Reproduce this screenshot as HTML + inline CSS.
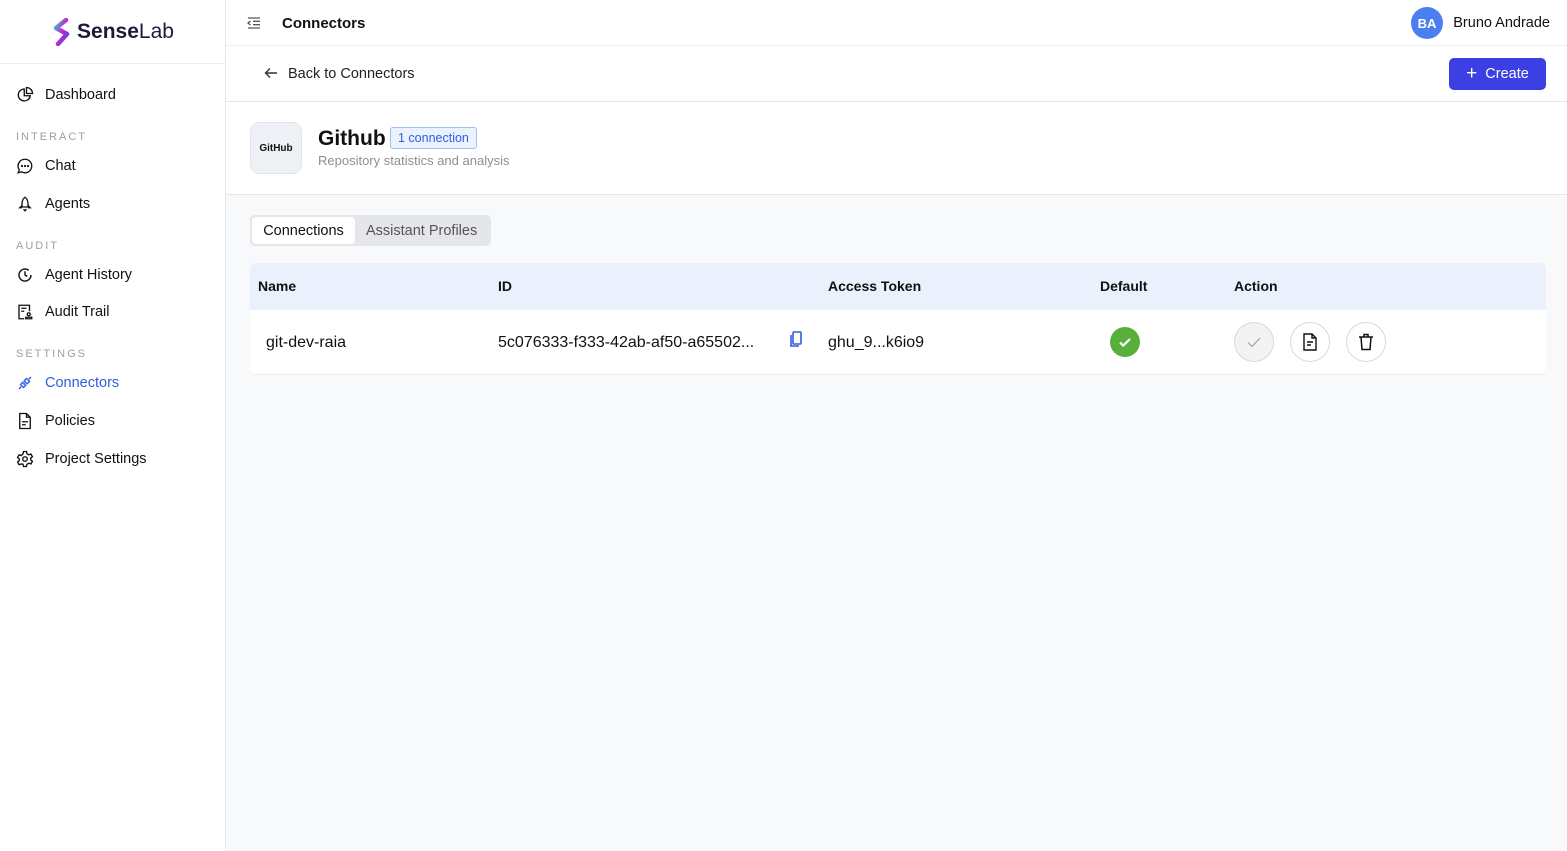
<!DOCTYPE html>
<html><head><meta charset="utf-8"><style>
*{box-sizing:border-box;margin:0;padding:0}
body{width:1567px;height:851px;font-family:"Liberation Sans",sans-serif;color:#111;background:#f8f9fb;position:relative;overflow:hidden;font-size:14px}
.side{position:absolute;left:0;top:0;width:226px;height:851px;background:#fff;border-right:1px solid #e5e7eb}
.logo{height:64px;border-bottom:1px solid #eceef1;display:flex;align-items:center;justify-content:center;font-size:21px;font-weight:bold;color:#1e1b3a}
.logo svg{margin-right:4px}
.logo span{font-weight:normal}
.item{position:absolute;left:16px;display:flex;align-items:center;gap:11px;font-size:14.5px}
.item svg{width:18px;height:18px;flex:none}
.sec{position:absolute;left:16px;font-size:11px;letter-spacing:2px;color:#9aa0aa}
.top{position:absolute;left:226px;top:0;right:0;height:46px;background:#fff;border-bottom:1px solid #eceef1}
.bar2{position:absolute;left:226px;top:46px;right:0;height:56px;background:#fff;border-bottom:1px solid #e5e7eb}
.head{position:absolute;left:226px;top:102px;right:0;height:93px;background:#fff;border-bottom:1px solid #e5e7eb}
.tbl{position:absolute;left:250px;top:263px;width:1296px;height:112px;background:#fff;border-radius:6px;overflow:hidden;border-bottom:1px solid #eceef1}
.th{height:47px;background:#eaf1fd;position:relative;font-weight:bold;font-size:14px}
.th div,.tr div{position:absolute}
.th div{top:15px}
.circ{width:40px;height:40px;border-radius:50%;border:1px solid #d7d9dd;display:flex;align-items:center;justify-content:center;background:#fff}
</style></head><body>
<div class="side">
<div class="logo"><svg width="22" height="28" viewBox="0 0 22 28"><defs><linearGradient id="g" x1="0" y1="0" x2="1" y2="1"><stop offset="0" stop-color="#2dd4bf"/><stop offset=".5" stop-color="#c026d3"/><stop offset="1" stop-color="#4f46e5"/></linearGradient></defs><path d="M15 2 L5 10 L16 16 L7 26" stroke="url(#g)" stroke-width="4.5" fill="none" stroke-linecap="round" stroke-linejoin="round"/></svg>Sense<span>Lab</span></div>
<div class="item" style="top:86px"><svg viewBox="0 0 24 24" fill="none" stroke="#111" stroke-width="1.8"><path d="M11 4a8 8 0 1 0 8 9h-8z"/><path d="M14 2v8h8a8 8 0 0 0-8-8z"/></svg>Dashboard</div>
<div class="sec" style="top:131px">INTERACT</div>
<div class="item" style="top:157px"><svg viewBox="0 0 24 24" fill="none" stroke="#111" stroke-width="1.8"><path d="M12 3a9 9 0 1 1-4.5 16.8L3 21l1.3-4A9 9 0 0 1 12 3z"/><circle cx="8" cy="12" r=".6"/><circle cx="12" cy="12" r=".6"/><circle cx="16" cy="12" r=".6"/></svg>Chat</div>
<div class="item" style="top:195px"><svg viewBox="0 0 24 24" fill="none" stroke="#111" stroke-width="1.8"><path d="M12 3c3 2 4 5 4 9v4H8v-4c0-4 1-7 4-9zM8 14l-3 3h3M16 14l3 3h-3M10 19l2 2 2-2"/></svg>Agents</div>
<div class="sec" style="top:240px">AUDIT</div>
<div class="item" style="top:266px"><svg viewBox="0 0 24 24" fill="none" stroke="#111" stroke-width="1.9"><path d="M20 12a8 8 0 1 1-3-6.2"/><path d="M12 7v5l3 2"/></svg>Agent History</div>
<div class="item" style="top:303px"><svg viewBox="0 0 24 24" fill="none" stroke="#111" stroke-width="1.8"><path d="M11 21H4V3h14v8"/><path d="M7 7h7M7 11h4"/><circle cx="17" cy="15" r="2"/><path d="M13 21h8v-2h-8z"/></svg>Audit Trail</div>
<div class="sec" style="top:348px">SETTINGS</div>
<div class="item" style="top:374px;color:#2f5ee0"><svg viewBox="0 0 24 24" fill="none" stroke="#2f5ee0" stroke-width="1.8"><path d="M4 20l3-3M20 4l-3 3M9 11l-3 3 4 4 3-3zM15 13l3-3-4-4-3 3zM10 14l2-2"/></svg>Connectors</div>
<div class="item" style="top:412px"><svg viewBox="0 0 24 24" fill="none" stroke="#111" stroke-width="1.8"><path d="M5 2h9l5 5v15H5zM14 2v5h5M8 13h8M8 17h5"/></svg>Policies</div>
<div class="item" style="top:450px"><svg viewBox="0 0 24 24" fill="none" stroke="#111" stroke-width="1.8"><circle cx="12" cy="12" r="3"/><path d="M10 2h4l.6 3 2.4 1.4 2.9-1 2 3.5-2.3 2v2.2l2.3 2-2 3.5-2.9-1-2.4 1.4-.6 3h-4l-.6-3L7 18.6l-2.9 1-2-3.5 2.3-2v-2.2l-2.3-2 2-3.5 2.9 1L9.4 5z"/></svg>Project Settings</div>
</div>
<div class="top">
<svg style="position:absolute;left:20px;top:15px" width="16" height="16" viewBox="0 0 16 16" fill="none" stroke="#555" stroke-width="1.3"><path d="M2 3h12M7 6.3h7M7 9.7h7M2 13h12M4.5 6l-2.5 2 2.5 2"/></svg>
<div style="position:absolute;left:56px;top:15px;font-size:15px;font-weight:bold">Connectors</div>
<div style="position:absolute;right:124px;top:7px;width:32px;height:32px;border-radius:50%;background:#4a7ff0;color:#fff;font-size:13px;font-weight:bold;display:flex;align-items:center;justify-content:center">BA</div>
<div style="position:absolute;right:17px;top:15px;font-size:14.5px">Bruno Andrade</div>
</div>
<div class="bar2">
<svg style="position:absolute;left:38px;top:20px" width="14" height="14" viewBox="0 0 14 14" fill="none" stroke="#333" stroke-width="1.4"><path d="M13 7H2M6 2.5L1.5 7 6 11.5"/></svg>
<div style="position:absolute;left:62px;top:20px;font-size:14.5px;color:#222">Back to Connectors</div>
<div style="position:absolute;right:21px;top:12px;width:97px;height:32px;background:#3b3fe4;border-radius:5px;color:#fff;font-size:14.5px;display:flex;align-items:center;justify-content:center;gap:8px"><span style="font-size:19px;font-weight:300">+</span>Create</div>
</div>
<div class="head">
<div style="position:absolute;left:24px;top:20px;width:52px;height:52px;border-radius:9px;background:#eef1f6;border:1px solid #e2e6ec;display:flex;align-items:center;justify-content:center;font-size:10px;font-weight:bold">GitHub</div>
<div style="position:absolute;left:92px;top:25px;font-size:21px;font-weight:bold">Github</div>
<div style="position:absolute;left:164px;top:25px;height:22px;padding:0 7px;border:1px solid #9dc0f5;background:#eaf2fe;border-radius:3px;color:#2f5ee0;font-size:12.5px;line-height:20px">1 connection</div>
<div style="position:absolute;left:92px;top:51px;font-size:13px;color:#8a8f97">Repository statistics and analysis</div>
</div>
<div style="position:absolute;left:250px;top:215px;width:241px;height:31px;background:#e5e6e9;border-radius:5px">
<div style="position:absolute;left:2px;top:2px;width:103px;height:27px;background:#fff;border-radius:4px;font-size:14.5px;text-align:center;line-height:29px">Connections</div>
<div style="position:absolute;left:116px;top:2px;line-height:29px;font-size:14.5px;color:#555">Assistant Profiles</div>
</div>
<div class="tbl">
<div class="th"><div style="left:8px">Name</div><div style="left:248px">ID</div><div style="left:578px">Access Token</div><div style="left:850px">Default</div><div style="left:984px">Action</div></div>
<div class="tr" style="position:relative;height:64px;font-size:16px">
<div style="left:16px;top:24px">git-dev-raia</div>
<div style="left:248px;top:24px">5c076333-f333-42ab-af50-a65502...</div>
<svg style="position:absolute;left:538px;top:21px" width="16" height="18" viewBox="0 0 16 18" fill="none" stroke="#2f5ee0" stroke-width="1.6"><rect x="5" y="1" width="8" height="12" rx="1"/><path d="M3 4v11h8"/></svg>
<div style="left:578px;top:24px">ghu_9...k6io9</div>
<div style="left:860px;top:17px;width:30px;height:30px;border-radius:50%;background:#58b03a;display:flex;align-items:center;justify-content:center"><svg width="16" height="16" viewBox="0 0 16 16" fill="none" stroke="#fff" stroke-width="2.2"><path d="M3 8.5l3.2 3L13 5"/></svg></div>
<div class="circ" style="left:984px;top:12px;background:#f3f3f4"><svg width="18" height="18" viewBox="0 0 18 18" fill="none" stroke="#aaa" stroke-width="1.3"><path d="M3 9.5l4 4L15 5"/></svg></div>
<div class="circ" style="left:1040px;top:12px"><svg width="16" height="18" viewBox="0 0 16 18" fill="none" stroke="#111" stroke-width="1.4"><path d="M2 1h8l4 4v12H2zM10 1v4h4M5 9h6M5 12h4"/></svg></div>
<div class="circ" style="left:1096px;top:12px"><svg width="16" height="18" viewBox="0 0 16 18" fill="none" stroke="#111" stroke-width="1.5"><path d="M1 4h14M6 4V1.5h4V4M3 4l1 12.5h8L13 4"/></svg></div>
</div>
</div>
</body></html>
